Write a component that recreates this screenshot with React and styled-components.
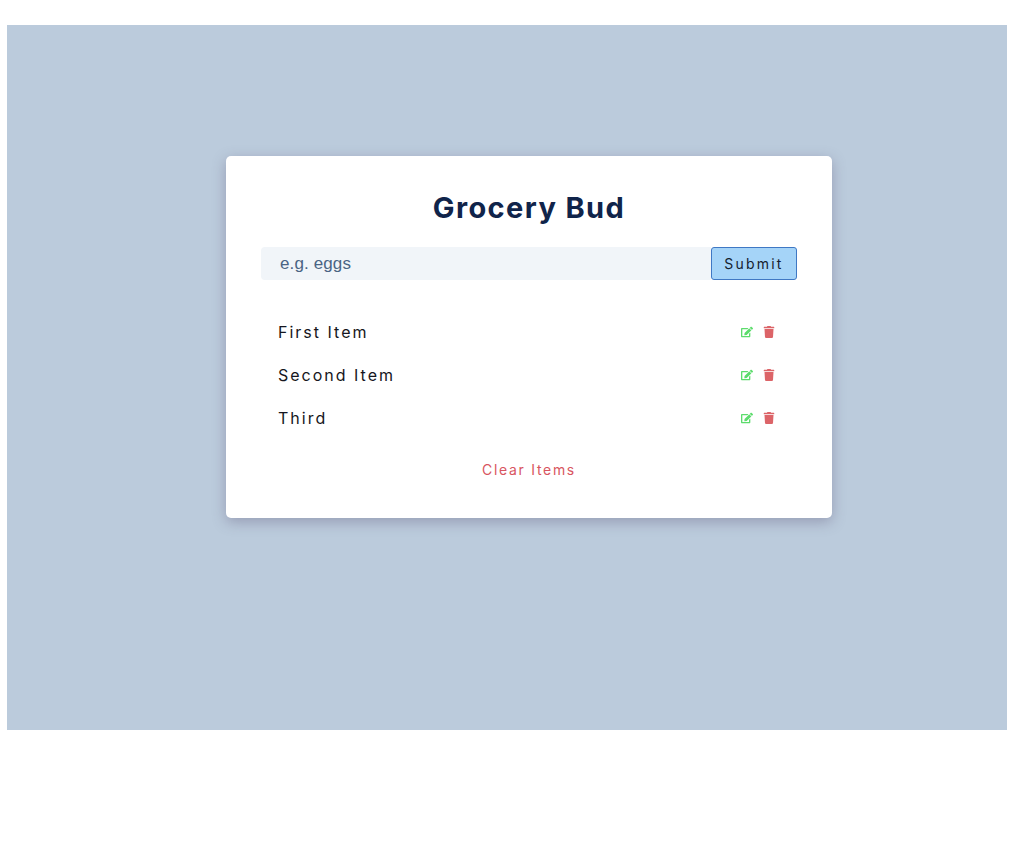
import React from "react";
import styled, { createGlobalStyle } from "styled-components";
import { FaEdit, FaTrash } from "react-icons/fa";

const GlobalStyle = createGlobalStyle`
  * { box-sizing: border-box; margin: 0; padding: 0; }
  body { background: #fff; font-family: Inter, "Liberation Sans", sans-serif; overflow: hidden; }
`;
const Page = styled.main`
  width: 1000px;
  height: 705px;
  margin: 25px 0 0 7px;
  padding: 131px 175px 0 219px;
  background: #bbcbdc;
`;
const Card = styled.section`
  width: 606px;
  height: 362px;
  padding: 33px 35px 0;
  border-radius: 5px;
  background: #fff;
  box-shadow: 0 4px 14px rgba(85, 75, 110, 0.36);
`;
const Title = styled.h1`
  height: 36px;
  line-height: 37px;
  font-size: 29px;
  font-weight: 700;
  letter-spacing: 1.4px;
  text-align: center;
  color: #10244a;
`;
const Form = styled.form`
  display: flex;
  margin-top: 22px;
  height: 33px;
`;
const Input = styled.input`
  flex: 1;
  min-width: 0;
  border: 0;
  padding: 0 19px;
  border-radius: 4px 0 0 4px;
  background: #f1f5f9;
  font: 17px "Liberation Sans", sans-serif;
  letter-spacing: 0.12px;
  &::placeholder { color: #4a6484; opacity: 1; }
`;
const Submit = styled.button`
  width: 86px;
  border: 1px solid #3f78c4;
  border-radius: 3px;
  background: #a5d4f8;
  font: 14px Inter, sans-serif;
  letter-spacing: 2.2px;
  color: #14202e;
`;
const List = styled.ul`
  list-style: none;
  margin-top: 30px;
`;
const Item = styled.li`
  display: flex;
  align-items: center;
  justify-content: space-between;
  height: 43.3px;
  padding: 0 22px 0 17px;
`;
const Name = styled.p`
  font-size: 16px;
  letter-spacing: 2px;
  color: #161620;
`;
const Actions = styled.div`
  display: flex;
  gap: 10px;
`;
const IconButton = styled.button`
  display: flex;
  border: 0;
  background: transparent;
  font-size: 12px;
  color: ${(p) => p.$color};
`;
const Clear = styled.button`
  display: block;
  margin: 20px auto 0;
  border: 0;
  background: transparent;
  font: 14px/20px Inter, sans-serif;
  letter-spacing: 1.7px;
  color: #d85560;
`;

export default function App() {
  return (
    <>
      <GlobalStyle />
      <Page>
        <Card>
          <Title>Grocery Bud</Title>
          <Form>
            <Input placeholder="e.g. eggs" />
            <Submit type="button">Submit</Submit>
          </Form>
          <List>
            {["First Item", "Second Item", "Third"].map((name) => (
              <Item key={name}>
                <Name>{name}</Name>
                <Actions>
                  <IconButton $color="#5cdc6c" aria-label="Edit"><FaEdit /></IconButton>
                  <IconButton $color="#dc6468" aria-label="Delete"><FaTrash /></IconButton>
                </Actions>
              </Item>
            ))}
          </List>
          <Clear>Clear Items</Clear>
        </Card>
      </Page>
    </>
  );
}
